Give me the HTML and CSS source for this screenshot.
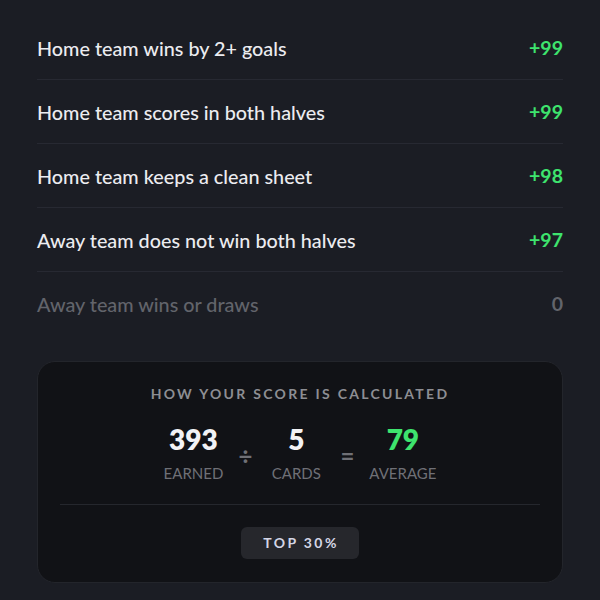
FILE: index.html
```html
<!DOCTYPE html>
<html>
<head>
<meta charset="utf-8">
<link rel="stylesheet" href="styles.css">
</head>
<body>
<div class="page">
  <ul class="list">
    <li class="row"><span class="label">Home team wins by 2+ goals</span><span class="pts">+99</span></li>
    <li class="row"><span class="label">Home team scores in both halves</span><span class="pts">+99</span></li>
    <li class="row"><span class="label">Home team keeps a clean sheet</span><span class="pts">+98</span></li>
    <li class="row"><span class="label">Away team does not win both halves</span><span class="pts">+97</span></li>
    <li class="row miss"><span class="label">Away team wins or draws</span><span class="pts">0</span></li>
  </ul>
  <section class="card">
    <h2 class="card-title">HOW YOUR SCORE IS CALCULATED</h2>
    <div class="calc">
      <div class="term"><span class="num">393</span><span class="cap">EARNED</span></div>
      <span class="op">÷</span>
      <div class="term"><span class="num">5</span><span class="cap">CARDS</span></div>
      <span class="op">=</span>
      <div class="term"><span class="num green">79</span><span class="cap">AVERAGE</span></div>
    </div>
    <div class="sep"></div>
    <div class="badge-wrap"><span class="badge">TOP 30%</span></div>
  </section>
</div>
</body>
</html>
```
FILE: styles.css
```css
html, body {
  margin: 0;
  padding: 0;
  background: #1b1d24;
}
body {
  font-family: "Lato", "Noto Sans", sans-serif;
  color: #ececf0;
}
.page {
  padding: 16px 37px 0 37px;
}
.list {
  list-style: none;
  margin: 0;
  padding: 0;
}
.row {
  display: flex;
  justify-content: space-between;
  align-items: center;
  height: 63px;
  border-bottom: 1px solid #272932;
}
.row:last-child {
  border-bottom: none;
}
.label {
  font-size: 19.8px;
  font-weight: 500;
  color: #ececf0;
}
.pts {
  font-size: 19.5px;
  font-weight: 700;
  color: #3ee46e;
}
.miss .label, .miss .pts {
  color: #62646b;
}
.card {
  margin-top: 26px;
  background: #111216;
  border: 1px solid #23252b;
  border-radius: 18px;
  padding: 23px 22px 23px;
}
.card-title {
  margin: 0;
  text-align: center;
  font-size: 14px;
  font-weight: 700;
  letter-spacing: 2.3px;
  color: #8d8e93;
  line-height: 18px;
}
.calc {
  display: flex;
  justify-content: center;
  align-items: center;
  gap: 14px;
  margin-top: 19px;
}
.term {
  display: flex;
  flex-direction: column;
  align-items: center;
  min-width: 58px;
}
.num {
  font-size: 28px;
  font-weight: 800;
  line-height: 34px;
  color: #f2f2f5;
}
.num.green {
  color: #3ee46e;
}
.cap {
  font-size: 15px;
  color: #6f7076;
  line-height: 18px;
  margin-top: 8px;
}
.op {
  font-size: 24px;
  font-weight: 700;
  line-height: 28px;
  color: #6f7076;
  padding-top: 8px;
  width: 16px;
  text-align: center;
}
.sep {
  height: 1px;
  background: #25272d;
  margin-top: 22px;
}
.badge-wrap {
  display: flex;
  justify-content: center;
  margin-top: 22px;
}
.badge {
  background: #26272c;
  border-radius: 6px;
  padding: 7px 20px 7px 22px;
  font-size: 14px;
  font-weight: 700;
  letter-spacing: 2.4px;
  color: #d4d6e6;
  line-height: 18px;
}
```
